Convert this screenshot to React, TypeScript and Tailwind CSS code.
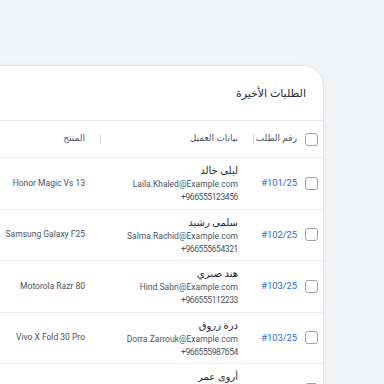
import React from "react";

const rows = [
  { id: "#101/25", name: "ليلى خالد", email: "Laila.Khaled@Example.com", phone: "+966555123456", product: "Honor Magic Vs 13" },
  { id: "#102/25", name: "سلمى رشيد", email: "Salma.Rachid@Example.com", phone: "+966555654321", product: "Samsung Galaxy F25" },
  { id: "#103/25", name: "هند صبري", email: "Hind.Sabri@Example.com", phone: "+966555112233", product: "Motorola Razr 80" },
  { id: "#103/25", name: "درة زروق", email: "Dorra.Zarrouk@Example.com", phone: "+966555987654", product: "Vivo X Fold 30 Pro" },
  { id: "#104/25", name: "أروى عمر", email: "Arwa.Omar@Example.com", phone: "+966555445566", product: "Oppo Find N5" },
];

function Box() {
  return <div className="w-[13px] h-[13px] rounded-[3px] border border-[#9ca3af] bg-white shrink-0" />;
}

export default function App() {
  return (
    <div
      className="w-[384px] h-[384px] overflow-hidden bg-[#f3f4f6]"
      style={{ fontFamily: "Roboto, 'Noto Sans', 'DejaVu Sans', sans-serif" }}
    >
      <div
        dir="rtl"
        className="mt-[66px] ml-[-100px] w-[423px] h-[340px] bg-white rounded-tr-[20px] rounded-br-[20px] shadow-[0_0_0_1px_rgba(0,0,0,0.04),0_2px_10px_rgba(0,0,0,0.05)]"
      >
        <div className="h-[55px] flex items-center pr-[17px] pt-[3px] border-b border-[#e5e7eb]">
          <span className="text-[11px] font-medium text-[#1f2937]">الطلبات الأخيرة</span>
        </div>
        <div className="h-[37px] flex items-center border-b border-[#eceef1] text-[9px] text-[#4b5563] whitespace-nowrap">
          <div className="w-[26px] flex pr-[5px]"><Box /></div>
          <div className="w-[43px]">رقم الطلب</div>
          <div className="w-[153px] flex items-center">
            <div className="w-px h-[10px] bg-[#d1d5db]" />
            <span className="pr-[15px]">بيانات العميل</span>
          </div>
          <div className="flex-1 flex items-center">
            <div className="w-px h-[10px] bg-[#d1d5db]" />
            <span className="pr-[15px]">المنتج</span>
          </div>
        </div>
        {rows.map((r, i) => (
          <div key={i} className="h-[51.5px] flex items-center border-b border-[#eceef1] whitespace-nowrap">
            <div className="w-[26px] flex pr-[5px]"><Box /></div>
            <div className="w-[43px] text-[9.5px] tracking-[-0.1px] text-[#2b6cd4]" dir="ltr" style={{ textAlign: "right" }}>{r.id}</div>
            <div className="w-[153px] pr-[16px] flex flex-col items-start pt-[1px]">
              <div className="text-[10px] leading-[15px] font-medium text-[#1f2937]">{r.name}</div>
              <div className="text-[8.5px] leading-[13px] text-[#4b5563]" dir="ltr">{r.email}</div>
              <div className="text-[8.5px] leading-[13px] tracking-[-0.4px] text-[#4b5563]" dir="ltr">{r.phone}</div>
            </div>
            <div className="flex-1 pr-[16px] text-[8.5px] text-[#4b5563]">
              <span dir="ltr">{r.product}</span>
            </div>
          </div>
        ))}
      </div>
    </div>
  );
}
